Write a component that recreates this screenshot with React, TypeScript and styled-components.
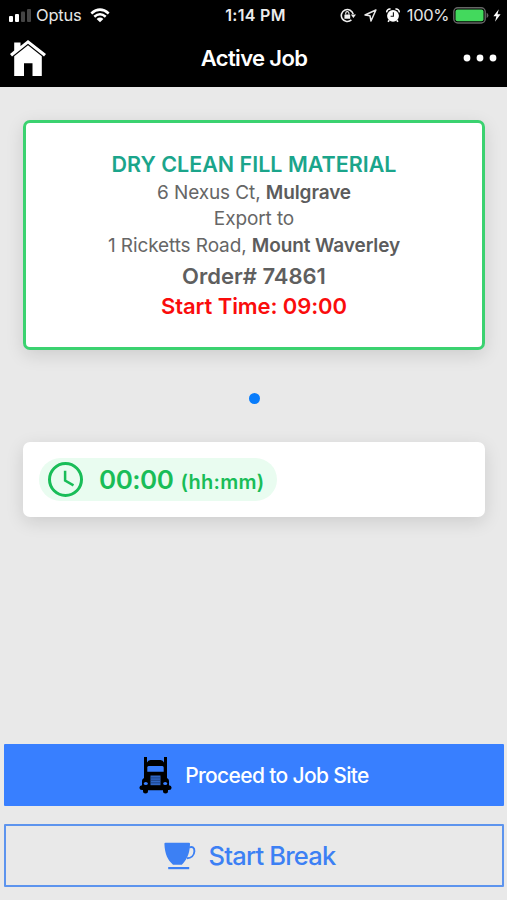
import React from 'react';
import styled, { createGlobalStyle } from 'styled-components';

const GlobalStyle = createGlobalStyle`
  * { box-sizing: border-box; }
  body { margin: 0; background: #e9e9e9; }
`;

const Screen = styled.div`
  width: 507px;
  height: 900px;
  display: flex;
  flex-direction: column;
  background: #e9e9e9;
  font-family: Inter, "Liberation Sans", sans-serif;
  overflow: hidden;
`;

const Top = styled.header`
  height: 87px;
  flex: none;
  background: #000;
  color: #fff;
`;

const StatusBar = styled.div`
  height: 30px;
  display: grid;
  grid-template-columns: 1fr auto 1fr;
  align-items: center;
  padding: 0 6px 0 8px;
`;

const StatusGroup = styled.div<{ $end?: boolean }>`
  display: flex;
  align-items: center;
  justify-content: ${(p) => (p.$end ? 'flex-end' : 'flex-start')};

  svg { display: block; flex: none; }
`;

const StatusGap = styled.span<{ $small?: boolean }>`
  width: ${(p) => (p.$small ? '4px' : '8.5px')};
`;

const Carrier = styled.span`
  margin: 0 8px 0 4px;
  font-size: 16.5px;
  letter-spacing: -0.2px;
  color: #e6e6e6;
`;

const Clock = styled.span`
  padding-left: 2px;
  font-size: 16px;
  font-weight: 600;
  letter-spacing: 0.3px;
  color: #ececec;
`;

const BatteryLevel = styled.span`
  margin: 0 4px 0 7px;
  font-size: 16.5px;
  letter-spacing: -0.4px;
  color: #e6e6e6;
`;

const NavBar = styled.div`
  height: 56px;
  display: grid;
  grid-template-columns: 1fr auto 1fr;
  align-items: center;
  padding: 0 10px;
`;

const IconButton = styled.button<{ $end?: boolean }>`
  justify-self: ${(p) => (p.$end ? 'end' : 'start')};
  padding: 0;
  border: 0;
  background: none;
  color: #fff;

  svg { display: block; }
`;

const Title = styled.h1`
  margin: 0;
  padding-left: 1px;
  font-size: 22px;
  font-weight: 600;
  letter-spacing: -0.65px;
`;

const Body = styled.main`
  flex: 1;
  display: flex;
  flex-direction: column;
  padding: 33px 22px 0 23px;
`;

const JobCard = styled.section`
  height: 230px;
  padding-top: 27px;
  border: 3px solid #3bd270;
  border-radius: 7px;
  background: #fff;
  box-shadow: 0 5px 18px rgba(0, 0, 0, 0.12);
  text-align: center;
  color: #666;
`;

const Material = styled.h2`
  margin: 0 0 2px;
  font-size: 21.5px;
  line-height: 28px;
  font-weight: 600;
  color: #1ba58b;
`;

const Address = styled.p`
  margin: 0;
  font-size: 19px;
  line-height: 26.3px;
  letter-spacing: -0.1px;

  strong { font-weight: 600; color: #5c5c5c; }
`;

const Detail = styled.p<{ $urgent?: boolean }>`
  margin: 0;
  padding-top: ${(p) => (p.$urgent ? '3px' : '4px')};
  font-size: 22px;
  line-height: 27px;
  font-weight: 600;
  letter-spacing: ${(p) => (p.$urgent ? '-0.1px' : '0')};
  color: ${(p) => (p.$urgent ? '#fa0c0c' : '#5f5f5f')};
`;

const PageDot = styled.div`
  width: 11px;
  height: 11px;
  margin: 43px auto 0;
  border-radius: 50%;
  background: #087cfb;
`;

const TimerCard = styled.section`
  height: 75px;
  margin-top: 38px;
  padding: 16px;
  border-radius: 7px;
  background: #fff;
  box-shadow: 0 5px 18px rgba(0, 0, 0, 0.12);
`;

const TimerPill = styled.div`
  width: 238px;
  height: 43px;
  display: flex;
  align-items: center;
  padding-left: 8px;
  border-radius: 22px;
  background: #e9fcf0;
  color: #19bd58;

  svg { flex: none; }
`;

const Elapsed = styled.span`
  margin-left: 15px;
  font-size: 26px;
  font-weight: 600;
  letter-spacing: -0.5px;
  white-space: nowrap;

  small { margin-left: 1px; font-size: 20px; letter-spacing: 0.3px; }
`;

const Actions = styled.footer`
  display: flex;
  flex-direction: column;
  gap: 18px;
  padding: 0 3px 13px 4px;
`;

const ActionButton = styled.button<{ $outline?: boolean }>`
  height: ${(p) => (p.$outline ? '63px' : '62px')};
  display: flex;
  align-items: center;
  justify-content: center;
  gap: 13px;
  padding: ${(p) => (p.$outline ? '0 9px 0 0' : '0')};
  border: 2px solid ${(p) => (p.$outline ? '#5d94ee' : '#387fff')};
  border-radius: 1px;
  background: ${(p) => (p.$outline ? 'transparent' : '#387fff')};
  color: ${(p) => (p.$outline ? '#3c80f4' : '#fff')};
  font-family: inherit;
  font-size: ${(p) => (p.$outline ? '25.5px' : '21px')};
  letter-spacing: ${(p) => (p.$outline ? '-0.8px' : '-0.65px')};
  font-weight: ${(p) => (p.$outline ? 450 : 500)};

  svg { flex: none; }
`;

const SignalIcon = () => (
  <svg width="24" height="15" viewBox="0 0 24 15">
    <rect x="1" y="8" width="4" height="6" rx="1" fill="#fff" />
    <rect x="7" y="6" width="4" height="8" rx="1" fill="#fff" />
    <rect x="13" y="3.5" width="4" height="10.5" rx="1" fill="#444" />
    <rect x="19" y="1" width="4" height="13" rx="1" fill="#444" />
  </svg>
);

const WifiIcon = () => (
  <svg width="20" height="15" viewBox="0 0 20 15" fill="none" stroke="#fff" strokeWidth="2.6">
    <path d="M1.3 5.4 Q10 -2.2 18.7 5.4" />
    <path d="M4.3 8.7 Q10 3.8 15.7 8.7" />
    <path d="M10 14.2 L6.6 10.9 Q10 8.2 13.4 10.9 Z" fill="#fff" stroke="none" />
  </svg>
);

const RotationLockIcon = () => (
  <svg width="16" height="15" viewBox="0 0 16 15" fill="none" stroke="#eee">
    <path d="M13.2 6.2 A6 6 0 1 0 11.4 11.9" strokeWidth="1.6" />
    <path d="M10.8 6.6 L16 6.6 L13.4 10 Z" fill="#eee" stroke="none" />
    <rect x="4.4" y="6.4" width="5.8" height="4.3" rx=".5" fill="#eee" stroke="none" />
    <path d="M5.7 6.6 V5.2 a1.6 1.6 0 0 1 3.2 0 V6.6" strokeWidth="1.1" />
  </svg>
);

const LocationIcon = () => (
  <svg width="13" height="13" viewBox="0 0 13 13" fill="none" stroke="#e8e8e8" strokeWidth="1.5" strokeLinejoin="round">
    <path d="M11.9 1 L1 6 L6 6.8 L7 12 Z" />
  </svg>
);

const AlarmIcon = () => (
  <svg width="14" height="15" viewBox="0 0 14 15">
    <circle cx="7" cy="7.8" r="5.9" fill="#fff" />
    <path d="M.8 4.4 A3 3 0 0 1 4.5 1.1 M13.2 4.4 A3 3 0 0 0 9.5 1.1 M3.3 12.2 L2 13.8 M10.7 12.2 L12 13.8" fill="none" stroke="#fff" strokeWidth="1.6" />
    <path d="M7.4 4.3 V8.2 H4.6" fill="none" stroke="#111" strokeWidth="1.1" />
  </svg>
);

const BatteryIcon = () => (
  <svg width="36" height="17" viewBox="0 0 36 17">
    <rect x=".8" y=".8" width="31.4" height="15.2" rx="4" fill="#000" stroke="#666" strokeWidth="1.4" />
    <rect x="2.5" y="2.5" width="28" height="11.8" rx="2" fill="#43d95d" />
    <path d="M33.6 5.8 Q35.4 6.5 35.4 8.4 Q35.4 10.3 33.6 11 Z" fill="#666" />
  </svg>
);

const BoltIcon = () => (
  <svg width="8" height="13" viewBox="0 0 8 13">
    <path d="M5.8 .3 L.4 7.2 H3.4 L2 12.7 L7.6 5.3 H4.5 Z" fill="#fff" />
  </svg>
);

const HomeIcon = () => (
  <svg width="36" height="37" viewBox="0 0 36 37">
    <path d="M4.2 2.5 H10.5 V6 L18 0 L36 14 L34 16.5 L18 3.8 L2 16.5 L0 14 L4.2 10.6 Z" fill="#fff" />
    <path d="M4.2 16.3 L18 5.3 L31.8 16.3 V36 H22.5 V23.3 H14 V36 H4.2 Z" fill="#fff" />
  </svg>
);

const MoreIcon = () => (
  <svg width="34" height="8" viewBox="0 0 34 8" fill="#fff">
    <circle cx="4" cy="4" r="3.4" />
    <circle cx="17" cy="4" r="3.4" />
    <circle cx="30" cy="4" r="3.4" />
  </svg>
);

const TimerIcon = () => (
  <svg width="37" height="37" viewBox="0 0 37 37" fill="none" stroke="#19bd58">
    <circle cx="18.5" cy="18.5" r="16" strokeWidth="3" />
    <path d="M18.1 9.8 V19.6 L26.5 24.4" strokeWidth="2.5" />
  </svg>
);

const TruckIcon = () => (
  <svg width="33" height="38" viewBox="0 0 33 38">
    <path d="M5 1 H8 V6.5 Q9 4 11.5 4 H21.5 Q24 4 25 6.5 V1 H28 V22 Q30 23 30 25 V29.3 Q32.6 29.5 32.6 31.8 Q32.6 34 30 34 H29 V35 Q29 37.5 26.5 37.5 Q24 37.5 24 35 V34.3 H9 V35 Q9 37.5 6.5 37.5 Q4 37.5 4 35 V34 H3 Q.4 34 .4 31.8 Q.4 29.5 3 29.3 V25 Q3 23 5 22 Z" fill="#000" />
    <path d="M9.6 10 H23.4 Q24.7 10 24.7 11.5 V15.7 H8.3 V11.5 Q8.3 10 9.6 10 Z" fill="#387fff" />
    <rect x="11.5" y="19.5" width="10" height="9.7" fill="#2f66c4" />
    <path d="M11.5 21.9 H21.5 M11.5 24.3 H21.5 M11.5 26.8 H21.5" stroke="#183a78" strokeWidth=".8" />
    <ellipse cx="6.8" cy="27.5" rx="2" ry="1.6" fill="#387fff" />
    <ellipse cx="26.2" cy="27.5" rx="2" ry="1.6" fill="#387fff" />
  </svg>
);

const CupIcon = () => (
  <svg width="32" height="28" viewBox="0 0 32 28">
    <path d="M.4 1.8 Q.4 .8 1.4 .8 H25 Q26.2 .8 26 2.2 C25.6 12.5 22.5 18 17.8 22.7 H9 C3.8 18 .8 12.5 .4 1.8 Z" fill="#3c80f4" />
    <path d="M25.2 5.5 C28.5 4 30.6 6 30.4 9.3 C30.2 13.5 27.2 16.2 23 16.2" fill="none" stroke="#3c80f4" strokeWidth="1.9" />
    <rect x="4.2" y="25" width="21" height="2.2" fill="#3c80f4" />
  </svg>
);

export default function App() {
  return (
    <Screen>
      <GlobalStyle />
      <Top>
        <StatusBar>
          <StatusGroup>
            <SignalIcon />
            <Carrier>Optus</Carrier>
            <WifiIcon />
          </StatusGroup>
          <Clock>1:14 PM</Clock>
          <StatusGroup $end>
            <RotationLockIcon />
            <StatusGap />
            <LocationIcon />
            <StatusGap />
            <AlarmIcon />
            <BatteryLevel>100%</BatteryLevel>
            <BatteryIcon />
            <StatusGap $small />
            <BoltIcon />
          </StatusGroup>
        </StatusBar>
        <NavBar>
          <IconButton aria-label="Home"><HomeIcon /></IconButton>
          <Title>Active Job</Title>
          <IconButton $end aria-label="More"><MoreIcon /></IconButton>
        </NavBar>
      </Top>
      <Body>
        <JobCard>
          <Material>DRY CLEAN FILL MATERIAL</Material>
          <Address>6 Nexus Ct, <strong>Mulgrave</strong></Address>
          <Address>Export to</Address>
          <Address>1 Ricketts Road, <strong>Mount Waverley</strong></Address>
          <Detail>Order# 74861</Detail>
          <Detail $urgent>Start Time: 09:00</Detail>
        </JobCard>
        <PageDot />
        <TimerCard>
          <TimerPill>
            <TimerIcon />
            <Elapsed>00:00 <small>(hh:mm)</small></Elapsed>
          </TimerPill>
        </TimerCard>
      </Body>
      <Actions>
        <ActionButton><TruckIcon />Proceed to Job Site</ActionButton>
        <ActionButton $outline><CupIcon />Start Break</ActionButton>
      </Actions>
    </Screen>
  );
}
